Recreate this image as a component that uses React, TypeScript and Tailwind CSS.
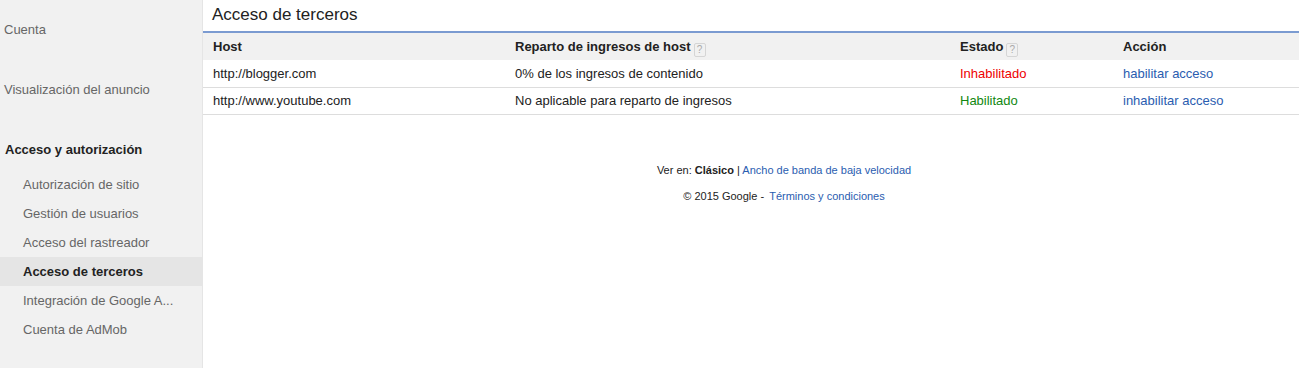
import React from 'react';

const font = { fontFamily: '"Liberation Sans", Arial, sans-serif' };

const Help = () => (
  <span className="ml-[3px] inline-flex h-[14px] w-[12px] items-center justify-center rounded-[2px] border border-[#d5d5d5] text-[10px] font-normal leading-none text-[#aaa] align-[-2px]">
    ?
  </span>
);

const subItems = [
  'Autorización de sitio',
  'Gestión de usuarios',
  'Acceso del rastreador',
  'Acceso de terceros',
  'Integración de Google A...',
  'Cuenta de AdMob',
];

const rows = [
  {
    host: 'http://blogger.com',
    share: '0% de los ingresos de contenido',
    status: 'Inhabilitado',
    statusColor: 'text-[#ee0000]',
    action: 'habilitar acceso',
  },
  {
    host: 'http://www.youtube.com',
    share: 'No aplicable para reparto de ingresos',
    status: 'Habilitado',
    statusColor: 'text-[#118811]',
    action: 'inhabilitar acceso',
  },
];

export default function App() {
  return (
    <div style={font} className="flex h-[368px] w-full bg-white text-[13px] text-[#222]">
      <aside className="w-[203px] shrink-0 border-r border-[#e5e5e5] bg-[#f1f1f1]">
        <div className="pt-[22px]">
          <div className="h-[16px] pl-[4px] leading-[16px] text-[#666]">Cuenta</div>
          <div className="mt-[44px] h-[16px] pl-[4px] leading-[16px] text-[#666]">Visualización del anuncio</div>
          <div className="mt-[44px] h-[16px] pl-[5px] font-bold leading-[16px] text-[#222]">Acceso y autorización</div>
          <ul className="mt-[12px]">
            {subItems.map((item) => {
              const active = item === 'Acceso de terceros';
              return (
                <li
                  key={item}
                  className={`h-[29px] pl-[23px] leading-[29px] ${
                    active ? 'bg-[#e5e5e5] font-bold text-[#222]' : 'text-[#666]'
                  }`}
                >
                  {item}
                </li>
              );
            })}
          </ul>
        </div>
      </aside>

      <main className="flex-1">
        <h1 className="h-[31px] pl-[9px] pt-[5px] text-[17px] leading-[20px] text-[#222]">Acceso de terceros</h1>
        <table className="w-full border-collapse border-t-2 border-[#7b9bd1] text-left">
          <thead>
            <tr className="h-[28px] bg-[#f1f1f1]">
              <th className="w-[302px] pl-[10px] font-bold">Host</th>
              <th className="w-[445px] pl-[10px] font-bold">
                Reparto de ingresos de host
                <Help />
              </th>
              <th className="w-[163px] pl-[10px] font-bold">
                Estado
                <Help />
              </th>
              <th className="pl-[10px] font-bold">Acción</th>
            </tr>
          </thead>
          <tbody>
            {rows.map((r) => (
              <tr key={r.host} className="h-[27px] border-b border-[#dddddd]">
                <td className="pl-[10px]">{r.host}</td>
                <td className="pl-[10px]">{r.share}</td>
                <td className={`pl-[10px] ${r.statusColor}`}>{r.status}</td>
                <td className="pl-[10px]">
                  <a href="#" className="text-[#2a5db0]">
                    {r.action}
                  </a>
                </td>
              </tr>
            ))}
          </tbody>
        </table>

        <footer className="mt-[47px] pl-[66px] text-center text-[11px] text-[#222]">
          <div className="leading-[16px]">
            Ver en: <b>Clásico</b> |{' '}
            <a href="#" className="text-[#2a5db0]">
              Ancho de banda de baja velocidad
            </a>
          </div>
          <div className="mt-[10px] leading-[16px]">
            © 2015 Google -{' '}
            <a href="#" className="ml-[2px] text-[#2a5db0]">
              Términos y condiciones
            </a>
          </div>
        </footer>
      </main>
    </div>
  );
}
